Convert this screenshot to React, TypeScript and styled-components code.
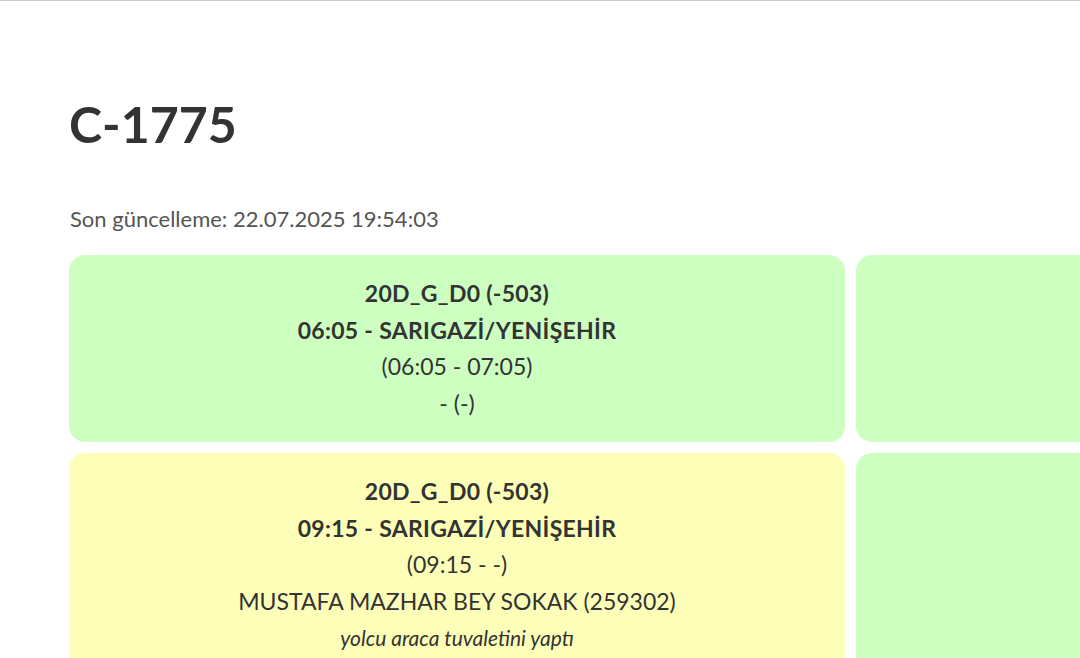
import React from "react";
import styled, { createGlobalStyle } from "styled-components";

const GlobalStyle = createGlobalStyle`
  html, body {
    margin: 0;
    padding: 0;
    background: #fff;
    font-family: Lato, "Noto Sans", sans-serif;
    color: #333;
  }
  body {
    border-top: 1px solid #ccc;
    overflow: hidden;
  }
`;

const Page = styled.div`
  padding: 87px 0 0 69px;
`;

const Title = styled.h1`
  margin: 0;
  font-size: 50px;
  font-weight: 700;
  line-height: 72px;
  color: #333;
`;

const Updated = styled.p`
  margin: 44px 0 21px 1px;
  font-size: 22px;
  line-height: 30px;
  color: #555;
`;

const Grid = styled.div`
  display: grid;
  grid-template-columns: 776px 776px;
  column-gap: 11px;
  row-gap: 11px;
  width: max-content;
`;

const Card = styled.div<{ $tone: "green" | "yellow" }>`
  background: ${(p) => (p.$tone === "green" ? "#ccffc0" : "#fdffb8")};
  border-radius: 16px;
  padding: 20px 16px;
  min-height: 146px;
  text-align: center;
`;

const Line = styled.div<{ $bold?: boolean }>`
  font-size: 23px;
  line-height: 36.7px;
  font-weight: ${(p) => (p.$bold ? 700 : 400)};
  letter-spacing: ${(p) => (p.$bold ? "0.3px" : "0")};
`;

const Note = styled.div`
  font-size: 21px;
  line-height: 36px;
  font-style: italic;
`;

type Trip = {
  code: string;
  route: string;
  range: string;
  stop: string;
  note?: string;
  tone: "green" | "yellow";
};

const trips: Trip[] = [
  {
    code: "20D_G_D0 (-503)",
    route: "06:05 - SARIGAZİ/YENİŞEHİR",
    range: "(06:05 - 07:05)",
    stop: "- (-)",
    tone: "green",
  },
  { code: "", route: "", range: "", stop: "", tone: "green" },
  {
    code: "20D_G_D0 (-503)",
    route: "09:15 - SARIGAZİ/YENİŞEHİR",
    range: "(09:15 - -)",
    stop: "MUSTAFA MAZHAR BEY SOKAK (259302)",
    note: "yolcu araca tuvaletini yaptı",
    tone: "yellow",
  },
  { code: "", route: "", range: "", stop: "", tone: "green" },
];

const App = () => {
  return (
    <>
      <GlobalStyle />
      <Page>
        <Title>C-1775</Title>
        <Updated>Son güncelleme: 22.07.2025 19:54:03</Updated>
        <Grid>
          {trips.map((t, i) => (
            <Card key={i} $tone={t.tone}>
              {t.code && <Line $bold>{t.code}</Line>}
              {t.route && <Line $bold>{t.route}</Line>}
              {t.range && <Line>{t.range}</Line>}
              {t.stop && <Line>{t.stop}</Line>}
              {t.note && <Note>{t.note}</Note>}
            </Card>
          ))}
        </Grid>
      </Page>
    </>
  );
};

export default App;
